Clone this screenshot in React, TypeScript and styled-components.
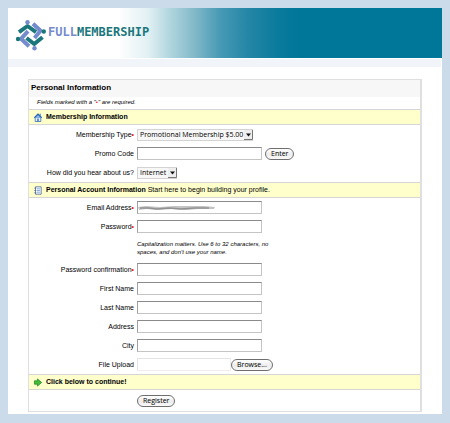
import React, { useRef, useState } from "react";
import styled, { createGlobalStyle } from "styled-components";

const GlobalStyle = createGlobalStyle`
  * { box-sizing: border-box; }
  body {
    margin: 0;
    background: #ccdbea;
    color: #000;
    font: 7px/10px "Liberation Sans", Arial, sans-serif;
  }
`;

const Page = styled.div`
  margin: 8px 8px 9px;
  background: #fff;
  padding-bottom: 2px;
`;

const Header = styled.header`
  display: flex;
  align-items: flex-start;
  height: 50px;
  padding: 11px 7px 0;
  background: linear-gradient(
    to right,
    #fff 110px, #e2f0f3 140px, #b4d8e0 160px, #7fb7c8 188px,
    #479ab5 212px, #2486a6 240px, #0a7b9c 270px, #007699 292px
  );
`;

const Brand = styled.a`
  display: flex;
  align-items: flex-start;
  gap: 2px;
  text-decoration: none;
`;

const BrandName = styled.span`
  margin-top: 7px;
  font: bold 12px/12px "DejaVu Sans Mono", monospace;
  color: #1b777c;
`;

const BrandLight = styled.span`
  color: #748bcd;
`;

const Strip = styled.div`
  height: 9px;
  margin-right: 1px;
  border-top: 1px solid #fff;
  background: #f1f5fa;
`;

const Form = styled.form`
  margin: 12px 20px 0;
  border: 1px solid #dfdfdf;
  border-right-width: 2px;
`;

const Title = styled.h1`
  margin: 0;
  padding: 2px 2px 3px;
  background: #f7f7f7;
  font-size: 8px;
  line-height: 12px;
`;

const Note = styled.p`
  margin: 0;
  padding: 1px 8px 2px;
  font-size: 6px;
  font-style: italic;
  line-height: 9px;
`;

const SectionBar = styled.h2`
  display: flex;
  align-items: center;
  gap: 4px;
  height: 16px;
  margin: 0;
  padding: 0 5px;
  border: solid #d6d6d6;
  border-width: 1px 0;
  background: #ffffcc;
  font-size: 7px;
`;

const Light = styled.span`
  font-weight: normal;
`;

const FieldRow = styled.div<{ $tall?: boolean }>`
  display: grid;
  grid-template-columns: 105px 1fr;
  column-gap: 3px;
  align-items: center;
  min-height: ${(p) => (p.$tall ? 21 : 19)}px;
`;

const Label = styled.label`
  text-align: right;
  white-space: nowrap;
`;

const Required = styled.span`
  color: #e8101c;
`;

const Controls = styled.div<{ $gap?: number }>`
  grid-column: 2;
  display: flex;
  align-items: center;
  gap: ${(p) => p.$gap ?? 0}px;
`;

const TextBox = styled.input<{ $faint?: boolean }>`
  width: ${(p) => (p.$faint ? 94 : 125)}px;
  height: 13px;
  padding: 0 2px;
  border: 1px solid;
  border-color: ${(p) => (p.$faint ? "#e4e4e4 #eee #eee #e4e4e4" : "#8a8a8a #c4c4c4 #c4c4c4 #a0a0a0")};
  border-radius: 0;
  background: transparent;
  font: 7px "Liberation Sans", Arial, sans-serif;
`;

const PillButton = styled.button`
  height: 12px;
  padding: 0 5px;
  border: 1px solid #6e6e6e;
  border-radius: 6px;
  background: linear-gradient(#fff, #ececec 55%, #fafafa);
  color: #000;
  font: 500 7px/10px "Open Sans", sans-serif;
`;

const SelectWrap = styled.span`
  position: relative;
  display: inline-flex;
`;

const Select = styled.select<{ $wide?: boolean }>`
  appearance: none;
  width: ${(p) => (p.$wide ? 116 : 40)}px;
  height: 12px;
  padding: 0 0 0 2px;
  border: 1px solid #d3d3d3;
  border-radius: 0;
  background: #f7f7f7;
  color: #000;
  font: 500 7px/10px "Open Sans", sans-serif;
`;

const SelectArrow = styled.svg`
  position: absolute;
  top: 1px;
  right: 0;
  pointer-events: none;
`;

const MaskedBox = styled.span`
  position: relative;
  display: inline-flex;
`;

const Smudge = styled.svg`
  position: absolute;
  top: 4px;
  left: 1px;
  pointer-events: none;
`;

const HintRow = styled.p`
  width: 140px;
  height: 24px;
  margin: 0 0 0 108px;
  padding-top: 4px;
  font-size: 6px;
  font-style: italic;
  line-height: 8px;
`;

function Logo() {
  return (
    <svg
      width="31"
      height="32"
      viewBox="0 0 31 32"
      fill="none"
      strokeWidth="4"
      strokeLinejoin="round"
      aria-hidden="true"
    >
      <g stroke="#1b777c">
        <path d="M4 13.2 12.5 7 21 13.2" />
        <path d="M11.5 19 19.2 25 27.5 18.3" />
      </g>
      <g stroke="#748bcd">
        <path d="M18 4.8 25.5 11.8 19.5 19" />
        <path d="M13 12.2 6 19.8 14 27.2" />
      </g>
      <g fill="#1b777c">
        <circle cx="28.8" cy="12.5" r="2.2" />
        <circle cx="3" cy="20" r="2.2" />
      </g>
      <g fill="#748bcd">
        <circle cx="12.5" cy="3.2" r="2.2" />
        <circle cx="19.5" cy="29.2" r="2.2" />
      </g>
    </svg>
  );
}

function HomeIcon() {
  return (
    <svg width="8" height="9" viewBox="0 0 8 9" aria-hidden="true">
      <path d="M1.2 4.5h5.6v4H1.2z" fill="#e6f1ff" stroke="#386fb8" strokeWidth=".8" />
      <path d="M.3 4.7 4 1.2l3.7 3.5" fill="#8dbdf2" stroke="#2965b6" strokeWidth="1.2" />
      <path d="M3.2 5.5h1.6v3H3.2z" fill="#477dc3" />
      <path d="M5.7.8h1v2h-1z" fill="#386fb8" />
    </svg>
  );
}

function NotebookIcon() {
  return (
    <svg width="8" height="9" viewBox="0 0 8 9" aria-hidden="true">
      <path d="M1.5.8h5.7v7.4H1.5z" fill="#f6faff" stroke="#66779d" strokeWidth=".9" />
      <path d="M3 2.8h3M3 4.5h3M3 6.2h3" stroke="#6f9dd5" strokeWidth=".8" />
      <path d="M.3 2.2h2M.3 4.5h2M.3 6.8h2" stroke="#55627f" strokeWidth=".8" />
    </svg>
  );
}

function ArrowIcon() {
  return (
    <svg width="8" height="9" viewBox="0 0 8 9" aria-hidden="true">
      <path d="M.5 2.8h3V.9l4.1 3.6-4.1 3.6V6.2h-3z" fill="#43ba3a" stroke="#278f28" strokeWidth=".8" />
    </svg>
  );
}

interface DropDownProps {
  id: string;
  option: string;
  wide?: boolean;
}

function DropDown({ id, option, wide }: DropDownProps) {
  return (
    <SelectWrap>
      <Select id={id} $wide={wide}>
        <option>{option}</option>
      </Select>
      <SelectArrow width="9" height="10" viewBox="0 0 9 10" aria-hidden="true">
        <path d="M0 0h9v10H0z" fill="#eee" />
        <path d="M0 9.5h8.5V0" fill="none" stroke="#777" />
        <path d="M2 3.5h5L4.5 6.5z" fill="#111" />
      </SelectArrow>
    </SelectWrap>
  );
}

interface FieldProps {
  id: string;
  label: string;
  required?: boolean;
  gap?: number;
  children?: React.ReactNode;
}

function Field({ id, label, required, gap, children }: FieldProps) {
  return (
    <FieldRow>
      <Label htmlFor={id}>
        {label}
        {required && <Required>•</Required>}
      </Label>
      <Controls $gap={gap}>{children ?? <TextBox id={id} name={id} />}</Controls>
    </FieldRow>
  );
}

function FileField() {
  const picker = useRef<HTMLInputElement>(null);
  const [name, setName] = useState("");
  return (
    <Field id="file" label="File Upload">
      <TextBox id="file" $faint readOnly value={name} />
      <input
        ref={picker}
        type="file"
        hidden
        aria-label="File Upload"
        onChange={(e) => setName(e.target.files?.[0]?.name ?? "")}
      />
      <PillButton type="button" onClick={() => picker.current?.click()}>
        Browse...
      </PillButton>
    </Field>
  );
}

export default function App() {
  return (
    <>
      <GlobalStyle />
      <Page>
        <Header>
          <Brand href="#">
            <Logo />
            <BrandName>
              <BrandLight>FULL</BrandLight>MEMBERSHIP
            </BrandName>
          </Brand>
        </Header>
        <Strip />
        <Form onSubmit={(e) => e.preventDefault()}>
          <Title>Personal Information</Title>
          <Note>
            Fields marked with a "<Required>•</Required>" are required.
          </Note>

          <SectionBar>
            <HomeIcon />
            Membership Information
          </SectionBar>
          <Field id="type" label="Membership Type" required>
            <DropDown id="type" option="Promotional Membership $5.00" wide />
          </Field>
          <Field id="promo" label="Promo Code" gap={3}>
            <TextBox id="promo" name="promo" />
            <PillButton type="button">Enter</PillButton>
          </Field>
          <Field id="source" label="How did you hear about us?">
            <DropDown id="source" option="Internet" />
          </Field>

          <SectionBar>
            <NotebookIcon />
            <span>
              Personal Account Information <Light>Start here to begin building your profile.</Light>
            </span>
          </SectionBar>
          <Field id="email" label="Email Address" required>
            <MaskedBox>
              <TextBox id="email" name="email" type="email" />
              <Smudge width="78" height="6" viewBox="0 0 78 6" aria-hidden="true">
                <path d="M0 2 8 1 22 2 36 1 52 1 66 1 77 2 76 4 60 4 48 5 34 4 20 5 8 4 1 5z" fill="#c4c4c4" />
                <path d="M2 3h9l8 1 12-1 12 1 14-1 14 0" fill="none" stroke="#929292" strokeWidth="1.4" />
              </Smudge>
            </MaskedBox>
          </Field>
          <Field id="password" label="Password" required>
            <TextBox id="password" name="password" type="password" />
          </Field>
          <HintRow>Capitalization matters. Use 6 to 32 characters, no spaces, and don't use your name.</HintRow>
          <Field id="confirm" label="Password confirmation" required>
            <TextBox id="confirm" name="confirm" type="password" />
          </Field>
          <Field id="first" label="First Name" />
          <Field id="last" label="Last Name" />
          <Field id="address" label="Address" />
          <Field id="city" label="City" />
          <FileField />

          <SectionBar>
            <ArrowIcon />
            Click below to continue!
          </SectionBar>
          <FieldRow $tall>
            <Controls>
              <PillButton type="submit">Register</PillButton>
            </Controls>
          </FieldRow>
        </Form>
      </Page>
    </>
  );
}
